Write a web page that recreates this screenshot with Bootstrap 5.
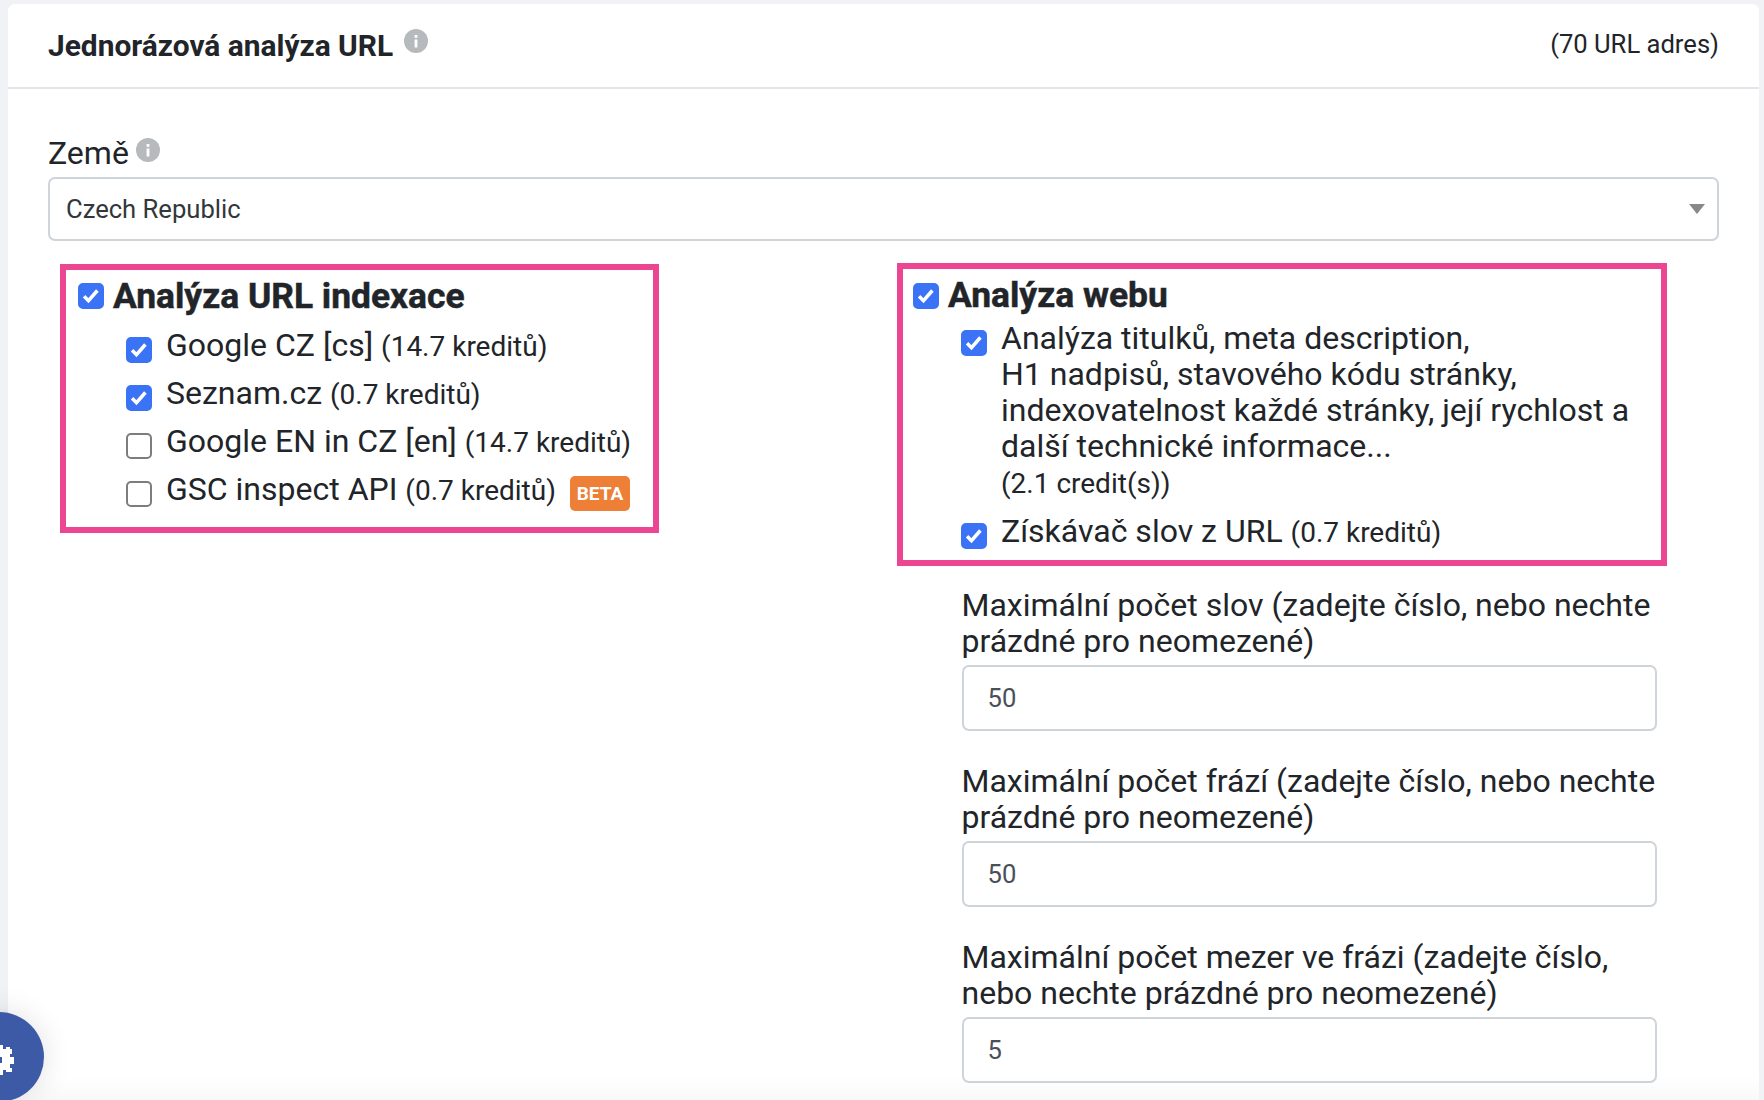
<!DOCTYPE html>
<html lang="cs">
<head>
<meta charset="utf-8">
<title>Jednorázová analýza URL</title>
<link rel="stylesheet" href="https://cdn.jsdelivr.net/npm/bootstrap@5.3.0/dist/css/bootstrap.min.css">
<style>
html,body{height:1100px;overflow:hidden}
body{background:#f0f2f5;font-family:"Roboto",sans-serif;color:#212529;font-size:32px;line-height:36px}
.page-wrap{padding:4px 5px 0 8px;height:1100px}
.panel{background:#fff;border:0;border-radius:7px 7px 0 0;height:1096px;overflow:hidden;position:relative}
.panel::after{content:"";position:absolute;left:0;right:0;bottom:0;height:24px;background:linear-gradient(rgba(0,0,0,0),rgba(0,0,0,.025))}
.panel-head{flex:none;height:85px;border-bottom:2px solid #e4e6e9;padding:0 40px;background:#fff}
.panel-title{font-size:29.9px;font-weight:700;margin:0;line-height:36px}
.url-count{font-size:25.6px;margin-top:-4px}
.panel-main{padding:46px 40px 0 40px}
.info-ico{width:24px;height:24px;display:inline-block;margin-left:3px;vertical-align:3px}
.field-label .info-ico{margin-left:-1px;vertical-align:2px}
.field-label{font-size:32px;line-height:36px;margin:0 0 6px}
.form-select.picker{height:64px;font-size:25.6px;color:#33373b;padding:0 16px;border:2px solid #ced4da;border-radius:7px;
 background-image:url("data:image/svg+xml,%3Csvg xmlns='http://www.w3.org/2000/svg' viewBox='0 0 16 10'%3E%3Cpath fill='%23888' d='M0 0h16L8 10z'/%3E%3C/svg%3E");background-size:16px 10px;background-position:right 12px center}
.field-row{margin-top:22px}
.pink-box{border:6px solid #ec4692;background:#fff}
.pink-left{width:599px;height:269px;padding:0 12px;margin-top:1px}
.pink-right{height:303px;padding:0 10px}
.box-head{display:flex;align-items:center;height:51px;padding-top:2px;font-size:35.4px;font-weight:700;line-height:43px;-webkit-text-stroke:.5px #212529}
.pink-left .box-head{padding-top:1px}
.box-head .tick{margin:0 9px 0 0}
.sub-list{padding-left:48px}
.pink-left .sub-list{padding-top:6px}
.opt-row{display:flex;margin-bottom:12px;line-height:36px;font-size:32px}
.pink-right .opt-row:first-child{margin-bottom:11px}
.pink-right .opt-row .tick{margin-right:14px}
.opt-row .tick{margin:10px 14px 0 0}
.credits{font-size:28px;line-height:1}
.pink-right br+.credits{line-height:36px}
.tick.form-check-input{width:26px;height:26px;flex:none;border:2px solid #7d7d7d;border-radius:5px;background-size:100%}
.tick.form-check-input:checked{background-color:#3a73f5;border-color:#3a73f5;background-image:url("data:image/svg+xml,%3Csvg xmlns='http://www.w3.org/2000/svg' viewBox='0 0 20 20'%3E%3Cpath fill='none' stroke='%23fff' stroke-width='3.2' d='M3.7 10.2l4 4L15.8 5'/%3E%3C/svg%3E")}
.beta-tag{display:inline-block;background:#ed8036;color:#fff;font-size:19px;font-weight:700;line-height:35px;height:35px;width:60px;text-align:center;border-radius:5px;margin:-6px 0 -6px 14px;vertical-align:0}
.left-cell{padding-left:12px}
.right-cell{padding-left:13.5px;padding-right:52.5px}
.num-fields{margin:21px -9px 0 64.5px;width:695px}
.num-field{margin-bottom:32.2px}
.num-field label{display:block;font-size:32px;line-height:36px;margin-bottom:6px;white-space:nowrap}
.form-control.num-input{height:66px;font-size:25.6px;color:#495057;padding:0 24px;border:2px solid #ced4da;border-radius:7px}
.chat-fab{position:fixed;left:-46px;top:1012px;width:90px;height:90px;border-radius:50%;background:#3c5aa6;box-shadow:0 0 30px rgba(0,0,0,.12);display:flex;align-items:center;justify-content:center}
.chat-fab svg{width:30px;height:30px;margin-top:5px}
</style>
</head>
<body>
<div class="page-wrap">
 <div class="card panel">
  <div class="panel-head d-flex align-items-center justify-content-between">
   <h5 class="panel-title">Jednorázová analýza URL <svg class="info-ico" viewBox="0 0 24 24"><circle cx="12" cy="12" r="12" fill="#b6babd"/><rect x="10.6" y="10.5" width="2.8" height="8" fill="#fff"/><rect x="10.6" y="6" width="2.8" height="2.8" fill="#fff"/></svg></h5>
   <span class="url-count">(70 URL adres)</span>
  </div>
  <div class="panel-main">
   <div class="field-label">Země <svg class="info-ico" viewBox="0 0 24 24"><circle cx="12" cy="12" r="12" fill="#b6babd"/><rect x="10.6" y="10.5" width="2.8" height="8" fill="#fff"/><rect x="10.6" y="6" width="2.8" height="2.8" fill="#fff"/></svg></div>
   <select class="form-select picker"><option>Czech Republic</option></select>
   <div class="row gx-0 field-row">
    <div class="col-6 left-cell">
     <div class="pink-box pink-left">
      <div class="box-head"><input class="form-check-input tick" type="checkbox" checked><span>Analýza URL indexace</span></div>
      <div class="sub-list">
       <div class="opt-row"><input class="form-check-input tick" type="checkbox" checked><span>Google CZ [cs] <span class="credits">(14.7 kreditů)</span></span></div>
       <div class="opt-row"><input class="form-check-input tick" type="checkbox" checked><span>Seznam.cz <span class="credits">(0.7 kreditů)</span></span></div>
       <div class="opt-row"><input class="form-check-input tick" type="checkbox"><span>Google EN in CZ [en] <span class="credits">(14.7 kreditů)</span></span></div>
       <div class="opt-row"><input class="form-check-input tick" type="checkbox"><span>GSC inspect API <span class="credits">(0.7 kreditů)</span><span class="beta-tag">BETA</span></span></div>
      </div>
     </div>
    </div>
    <div class="col-6 right-cell">
     <div class="pink-box pink-right">
      <div class="box-head"><input class="form-check-input tick" type="checkbox" checked><span>Analýza webu</span></div>
      <div class="sub-list">
       <div class="opt-row"><input class="form-check-input tick" type="checkbox" checked><span>Analýza titulků, meta description,<br>H1 nadpisů, stavového kódu stránky,<br>indexovatelnost každé stránky, její rychlost a<br>další technické informace...<br><span class="credits">(2.1 credit(s))</span></span></div>
       <div class="opt-row"><input class="form-check-input tick" type="checkbox" checked><span>Získávač slov z URL <span class="credits">(0.7 kreditů)</span></span></div>
      </div>
     </div>
     <div class="num-fields">
      <div class="num-field"><label>Maximální počet slov (zadejte číslo, nebo nechte<br>prázdné pro neomezené)</label><input class="form-control num-input" value="50"></div>
      <div class="num-field"><label>Maximální počet frází (zadejte číslo, nebo nechte<br>prázdné pro neomezené)</label><input class="form-control num-input" value="50"></div>
      <div class="num-field"><label>Maximální počet mezer ve frázi (zadejte číslo,<br>nebo nechte prázdné pro neomezené)</label><input class="form-control num-input" value="5"></div>
     </div>
    </div>
   </div>
  </div>
 </div>
</div>
<div class="chat-fab"><svg viewBox="0 0 30 30"><path fill="#fff" fill-rule="evenodd" shape-rendering="crispEdges" d="M11 0h8v4h3v-2h4v2h2v5h-2v3h4v7h-4v4h2v4h-6v-2h-3v5h-8v-4h-3v2H2v-2H0v-5h2v-3h-2v-7h3V7H1V3h5v2h5zM12 12v6h6v-6z"/></svg></div>
<script src="https://cdn.jsdelivr.net/npm/bootstrap@5.3.0/dist/js/bootstrap.bundle.min.js"></script>
</body>
</html>
